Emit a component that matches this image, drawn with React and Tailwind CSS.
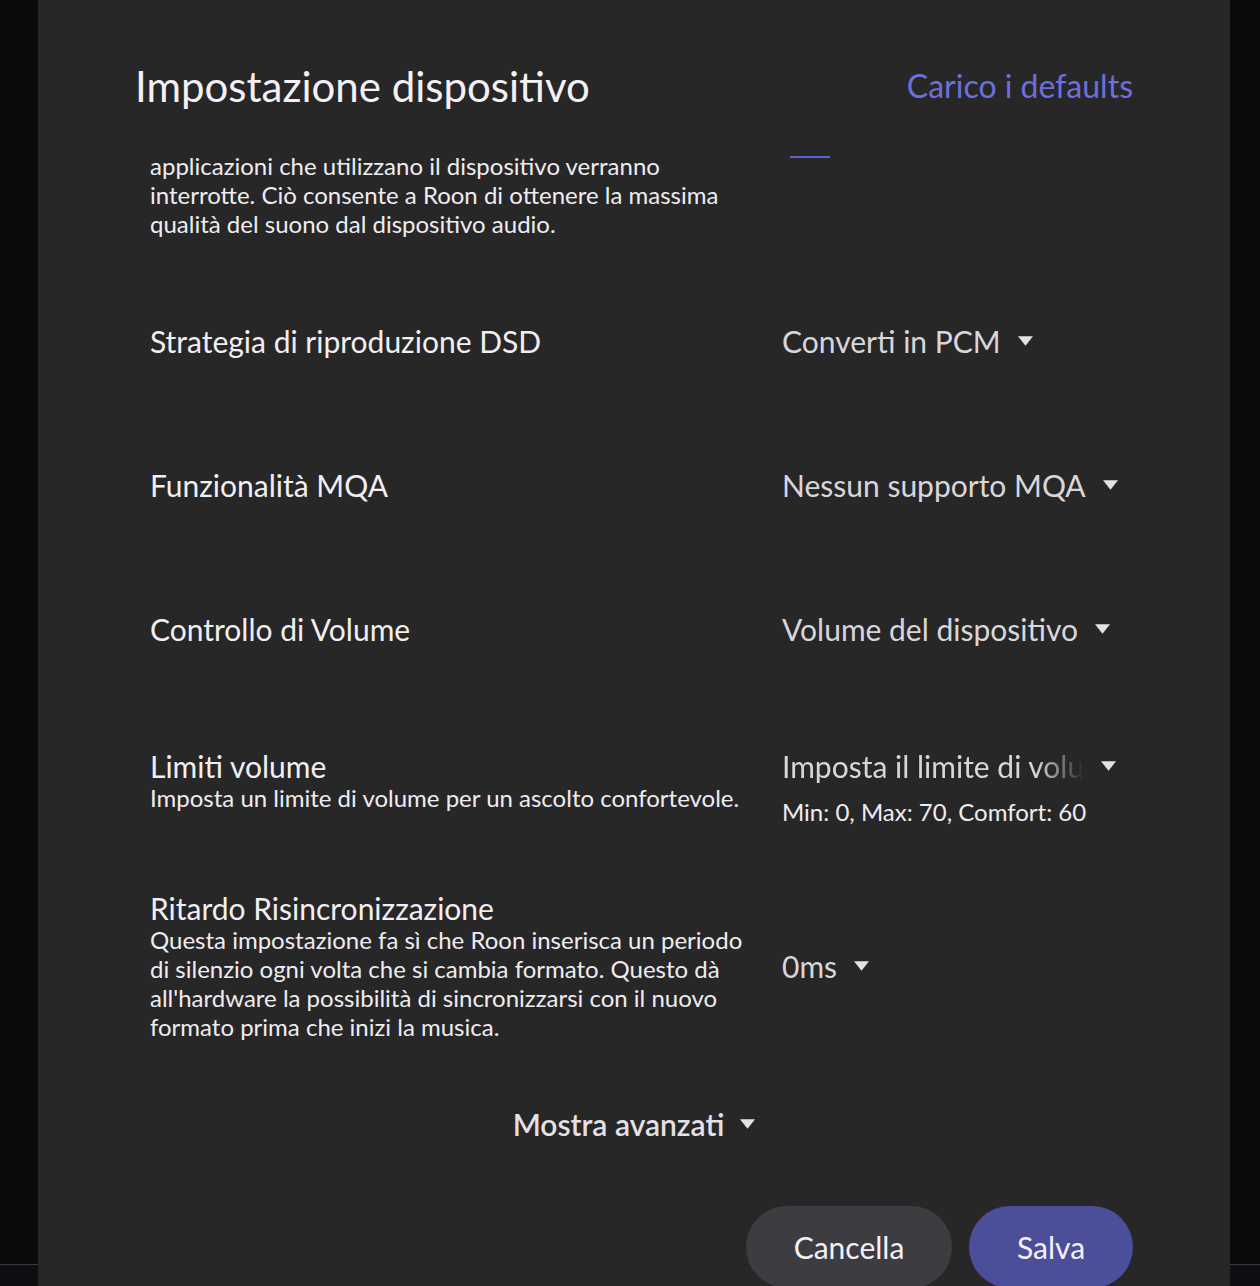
import React from 'react';

function Caret({ className = '' }) {
    return (
        <svg viewBox="0 0 16 10" className={`w-[15px] h-[10px] shrink-0 ${className}`}>
            <polygon points="0,0 16,0 8,10" fill="#e4e1e6" />
        </svg>
    );
}

function Select({ value, fade }) {
    return (
        <div className="flex items-center gap-[17px] text-[30px] leading-[34px] text-[#d9d6db]">
            {fade ? (
                <span className="block max-w-[302px] overflow-hidden whitespace-nowrap [mask-image:linear-gradient(to_right,black_84%,transparent)]">
                    {value}
                </span>
            ) : (
                <span className="whitespace-nowrap">{value}</span>
            )}
            <Caret />
        </div>
    );
}

function Row({ label, desc, children, className = '' }) {
    return (
        <div className={`flex gap-[26px] ${className}`}>
            <div className="w-[606px] shrink-0">
                {label && <div className="text-[30px] leading-[34px] text-[#f1eff3]">{label}</div>}
                {desc && <p className="text-[24px] leading-[29px] text-[#eeecf0]">{desc}</p>}
            </div>
            <div className="flex-1">{children}</div>
        </div>
    );
}

export default function App() {
    return (
        <div className="relative h-[1286px] overflow-hidden bg-[#0b090c] font-['Lato','Noto_Sans',sans-serif]">
            {/* app behind the dialog */}
            <div className="flex h-full flex-col">
                <div className="flex-1" />
                <div className="h-[22px] border-t border-[#38373e] bg-[#100e12]" />
            </div>

            {/* dialog */}
            <div className="absolute inset-y-0 left-[38px] w-[1192px] bg-[#282728] px-[97px] pt-[62px]">
                <div className="flex items-center justify-between">
                    <h1 className="text-[42px] leading-[48px] text-[#f3f1f5]">Impostazione dispositivo</h1>
                    <button className="text-[32px] leading-[48px] text-[#6c70dc]">Carico i defaults</button>
                </div>

                <div className="px-[15px]">
                    <Row
                        className="pt-[41px] pb-[31px]"
                        desc="applicazioni che utilizzano il dispositivo verranno interrotte. Ciò consente a Roon di ottenere la massima qualità del suono dal dispositivo audio."
                    >
                        <div className="ml-[8px] mt-[5px] h-[2px] w-[40px] bg-[#5b5fd6]" />
                    </Row>

                    <Row className="h-[144px] items-center" label="Strategia di riproduzione DSD">
                        <Select value="Converti in PCM" />
                    </Row>
                    <Row className="h-[144px] items-center" label="Funzionalità MQA">
                        <Select value="Nessun supporto MQA" />
                    </Row>
                    <Row className="h-[144px] items-center" label="Controllo di Volume">
                        <Select value="Volume del dispositivo" />
                    </Row>

                    <Row
                        className="pt-[48px] pb-[18px]"
                        label="Limiti volume"
                        desc="Imposta un limite di volume per un ascolto confortevole."
                    >
                        <Select value="Imposta il limite di volume" fade />
                        <div className="mt-[14px] text-[24px] leading-[29px] text-[#eeecf0]">
                            Min: 0, Max: 70, Comfort: 60
                        </div>
                    </Row>

                    <Row
                        className="items-center pt-[47px]"
                        label="Ritardo Risincronizzazione"
                        desc="Questa impostazione fa sì che Roon inserisca un periodo di silenzio ogni volta che si cambia formato. Questo dà all'hardware la possibilità di sincronizzarsi con il nuovo formato prima che inizi la musica."
                    >
                        <Select value="0ms" />
                    </Row>
                </div>

                <div className="mt-[66px] flex items-center justify-center gap-[16px] text-[30px] leading-[34px] font-semibold text-[#e3e0e6]">
                    <span>Mostra avanzati</span>
                    <Caret />
                </div>

                <div className="mt-[65px] flex justify-end gap-[17px]">
                    <button className="h-[82px] w-[206px] rounded-full bg-[#3d3c41] text-[30px] text-[#f3f1f5]">
                        Cancella
                    </button>
                    <button className="h-[82px] w-[164px] rounded-full bg-[#4b4f99] text-[30px] text-[#f3f1f5]">
                        Salva
                    </button>
                </div>
            </div>
        </div>
    );
}
